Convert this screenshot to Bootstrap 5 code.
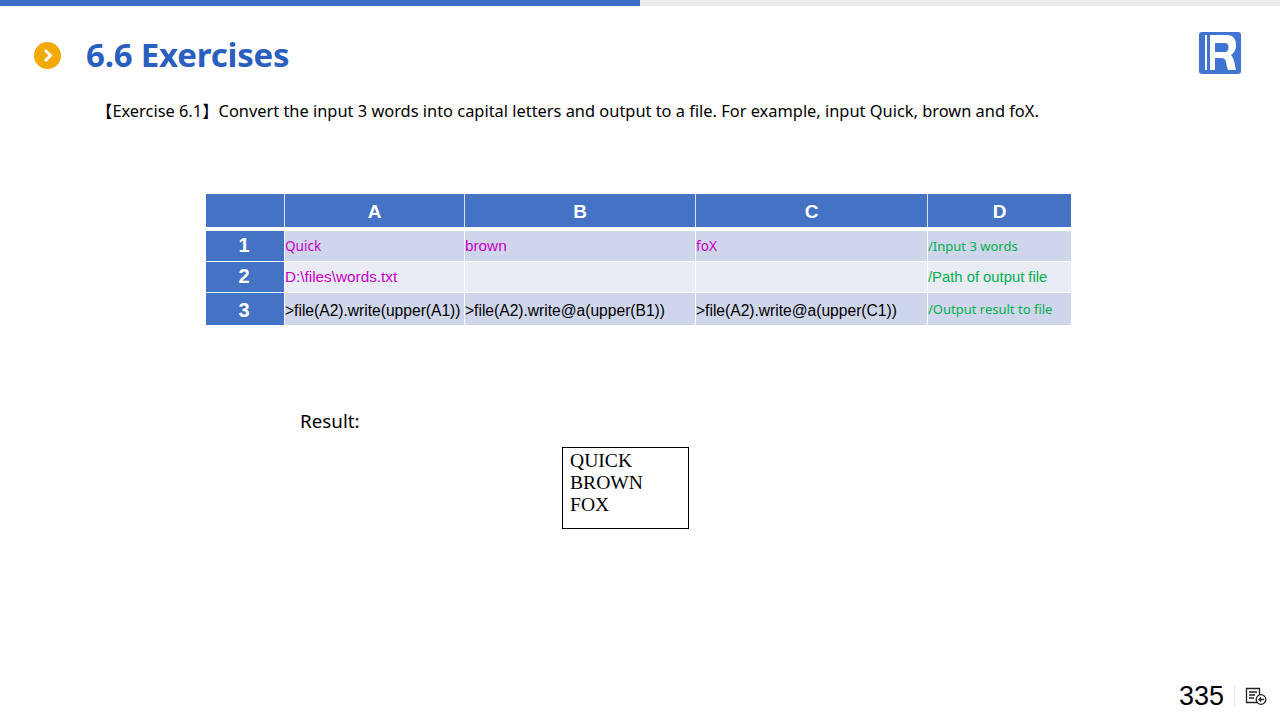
<!DOCTYPE html>
<html lang="en">
<head>
<meta charset="utf-8">
<title>6.6 Exercises</title>
<link href="https://cdn.jsdelivr.net/npm/bootstrap@5.3.0/dist/css/bootstrap.min.css" rel="stylesheet">
<style>
html,body{height:720px;overflow:hidden;background:#fff}
.slide-wrap{height:720px;font-family:"Noto Sans","Noto Sans CJK SC",sans-serif;color:#000}
.top-track{height:6px;border-radius:0;background:#ebebeb}
.top-track .progress-bar{background:#3b6cc6}
.head-row{padding:26px 39px 0 34px;height:82px}
.bullet-ic{width:27px;height:27px;margin-top:10px}
.slide-title{font-size:33px;font-weight:700;color:#2a5fc0;margin:0 0 0 25px;line-height:44px;letter-spacing:-.2px;padding-top:1px}
.logo-ic{width:42px;height:42px}
.exercise-text{font-size:16.4px;line-height:22px;margin:12px 0 0 96px;white-space:nowrap}
.sheet{table-layout:fixed;border-collapse:separate;border-spacing:0;width:865px;margin:72px 0 0 206px;font-family:"Liberation Sans",sans-serif}
.sheet td,.sheet th{padding:0;overflow:hidden;white-space:nowrap;vertical-align:middle;font-size:15.6px;line-height:20px;font-weight:400;border-left:1px solid #fff}
.sheet tr>:first-child{border-left:0}
.sheet thead th{background:#4472c4;color:#fff;height:33px;text-align:center;font-size:19px;font-weight:700;padding:2px 0 0;border-left-color:#dce4f3}
.gap-row td{height:4px;background:#fff;padding:0;border:0;line-height:0;font-size:0}
.sheet tbody .row-no{background:#4472c4;color:#fff;text-align:center;font-size:20px;font-weight:700;padding:0 2px 2px 0}
.band-a td{background:#cfd5ea}
.band-b td{background:#e9ebf5}
.band-a td,.band-b td{border-bottom:1px solid #fff}
.last-row td{border-bottom:0;padding-top:3px}
.sheet .last-row .row-no{padding:2px 2px 0 0}
.sheet .cell-mag{color:#c800c8;font-size:15.3px}
.cell-grn{color:#00b050}
.sheet .cell-small{font-family:"Noto Sans",sans-serif;font-size:13px;padding-top:0}
.sheet .cell-mag.cell-small{font-size:13.6px}
.sheet .cell-path{font-size:14.8px}
.result-label{font-size:18.8px;line-height:26px;margin:83px 0 0 300px}
.result-box{width:127px;height:82px;margin:13px 0 0 562px;border:1px solid #000;padding:2px 0 0 7px;font-family:"Liberation Serif",serif;font-size:19.6px;line-height:22px}
.foot-row{position:absolute;right:13px;bottom:10px;height:28px}
.page-no{font-family:"Liberation Sans",sans-serif;font-size:27px;line-height:28px}
.foot-sep{width:1px;height:20px;background:#dfe5f0;margin:0 10px}
.back-ic{width:22px;height:18px}
</style>
</head>
<body>
<div class="slide-wrap position-relative d-flex flex-column">
  <div class="progress top-track"><div class="progress-bar" style="width:50%"></div></div>
  <div class="head-row d-flex align-items-start">
    <svg class="bullet-ic flex-shrink-0" viewBox="0 0 27 27"><circle cx="13.5" cy="13.5" r="13.5" fill="#f2a900"/><path d="M11 8l5.500 5.500L11 19" fill="none" stroke="#fff" stroke-width="3"/></svg>
    <h1 class="slide-title">6.6 Exercises</h1>
    <svg class="logo-ic ms-auto" viewBox="0 0 42 42"><rect width="42" height="42" rx="3" fill="#3f74d0"/><path d="M6 3h2v35H6zM11 3h3v35h-3z" fill="#fff"/><path d="M14 3H28C34 3 37 7 37 13C37 18 35 21 32 23C34 25 35 28 35.500 31C36 34 36.500 36 37 38H29C28 36 27.500 33 27 30C26.500 27 25 26 22 26H16V20H26C28.500 20 29.500 18 29.500 15C29.500 12.500 28 11 26 11H16V38H14Z" fill="#fff"/></svg>
  </div>
  <p class="exercise-text">【Exercise 6.1】Convert the input 3 words into capital letters and output to a file. For example, input Quick, brown and foX.</p>
  <table class="sheet">
    <colgroup><col style="width:78px"><col style="width:180px"><col style="width:231px"><col style="width:232px"><col style="width:144px"></colgroup>
    <thead><tr><th></th><th>A</th><th>B</th><th>C</th><th>D</th></tr></thead>
    <tbody>
      <tr class="gap-row"><td colspan="5"></td></tr>
      <tr class="band-a" style="height:31px"><td class="row-no">1</td><td class="cell-mag cell-small">Quick</td><td class="cell-mag">brown</td><td class="cell-mag cell-small">foX</td><td class="cell-grn cell-small">/Input 3 words</td></tr>
      <tr class="band-b" style="height:31px"><td class="row-no">2</td><td class="cell-mag">D:\files\words.txt</td><td></td><td></td><td class="cell-grn cell-path">/Path of output file</td></tr>
      <tr class="band-a last-row" style="height:32px"><td class="row-no">3</td><td>&gt;file(A2).write(upper(A1))</td><td>&gt;file(A2).write@a(upper(B1))</td><td>&gt;file(A2).write@a(upper(C1))</td><td class="cell-grn cell-small">/Output result to file</td></tr>
    </tbody>
  </table>
  <div class="result-label">Result:</div>
  <div class="result-box">QUICK<br>BROWN<br>FOX</div>
  <div class="foot-row d-flex align-items-center">
    <span class="page-no">335</span>
    <span class="foot-sep"></span>
    <svg class="back-ic" viewBox="0 0 22 18" fill="none" stroke="#222" stroke-width="1.300"><path d="M12 15.500H1.500v-14h13V8"/><path d="M4 5h8M4 8h6M4 11h5"/><circle cx="16" cy="12.500" r="4.800"/><path d="M19 12.500h-5M16 10.500l-2 2 2 2"/></svg>
  </div>
</div>
<script src="https://cdn.jsdelivr.net/npm/bootstrap@5.3.0/dist/js/bootstrap.bundle.min.js"></script>
</body>
</html>
